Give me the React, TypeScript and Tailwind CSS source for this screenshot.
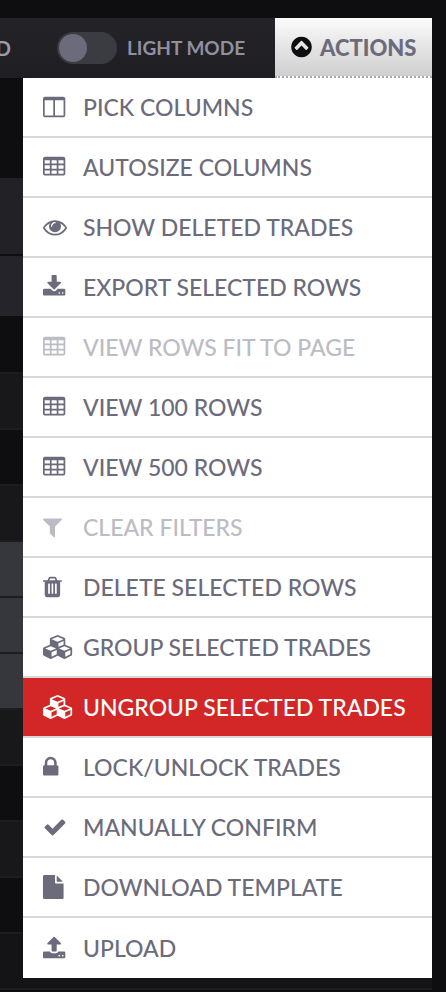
import type { ReactNode } from "react";

type IconProps = { d: string; x?: number; w?: number; className?: string };

/* Glyphs are drawn on a 1792-unit grid; x is the left edge of the glyph. */
function Icon({ d, x = 64, w = 2240, className = "w-[30px]" }: IconProps) {
  return (
    <svg
      viewBox={`${x} 0 ${w} 1792`}
      className={`h-6 shrink-0 fill-current ${className}`}
      fillRule="evenodd"
      aria-hidden="true"
    >
      <path d={d} />
    </svg>
  );
}

const cell = (x: number, y: number) =>
  `M${x + 32} ${y}h320q14 0 23 9t9 23v192q0 14-9 23t-23 9h-320q-14 0-23-9t-9-23v-192q0-14 9-23t23-9z`;

const TABLE =
  "M1728 288v1088q0 66-47 113t-113 47h-1344q-66 0-113-47t-47-113v-1088q0-66 47-113t113-47h1344q66 0 113 47t47 113z" +
  [384, 768, 1152].map((y) => [192, 704, 1216].map((x) => cell(x, y)).join("")).join("");
const COLUMNS =
  "M224 1536h608v-1152h-640v1120q0 13 9.5 22.5t22.5 9.5zm1376-32v-1120h-640v1152h608q13 0 22.5-9.5t9.5-22.5zm128-1216v1216q0 66-47 113t-113 47h-1344q-66 0-113-47t-47-113v-1216q0-66 47-113t113-47h1344q66 0 113 47t47 113z";
const EYE =
  "M1664 960q-152-236-381-353 61 104 61 225 0 185-131.5 316.5t-316.5 131.5-316.5-131.5-131.5-316.5q0-121 61-225-229 117-381 353 133 205 333.5 326.5t434.5 121.5 434.5-121.5 333.5-326.5zm-720-384q0-20-14-34t-34-14q-125 0-214.5 89.5t-89.5 214.5q0 20 14 34t34 14 34-14 14-34q0-86 61-147t147-61q20 0 34-14t14-34zm848 384q0 34-20 69-140 230-376.5 368.5t-499.5 138.5-499.5-139-376.5-368q-20-35-20-69t20-69q140-229 376.5-368t499.5-139 499.5 139 376.5 368q20 35 20 69z";
const DOWNLOAD =
  "M1344 1344q0-26-19-45t-45-19-45 19-19 45 19 45 45 19 45-19 19-45zm256 0q0-26-19-45t-45-19-45 19-19 45 19 45 45 19 45-19 19-45zm128-224v320q0 40-28 68t-68 28h-1472q-40 0-68-28t-28-68v-320q0-40 28-68t68-28h465l135 136q58 56 136 56t136-56l136-136h464q40 0 68 28t28 68zm-325-569q17 41-14 70l-448 448q-18 19-45 19t-45-19l-448-448q-31-29-14-70 17-39 59-39h256v-448q0-26 19-45t45-19h256q26 0 45 19t19 45v448h256q42 0 59 39z";
const UPLOAD =
  "M1344 1472q0-26-19-45t-45-19-45 19-19 45 19 45 45 19 45-19 19-45zm256 0q0-26-19-45t-45-19-45 19-19 45 19 45 45 19 45-19 19-45zm128-224v320q0 40-28 68t-68 28h-1472q-40 0-68-28t-28-68v-320q0-40 28-68t68-28h427q21 56 70.5 92t110.5 36h256q61 0 110.5-36t70.5-92h427q40 0 68 28t28 68zm-325-648q-17 40-59 40h-256v448q0 26-19 45t-45 19h-256q-26 0-45-19t-19-45v-448h-256q-42 0-59-40-17-39 14-69l448-448q18-19 45-19t45 19l448 448q31 30 14 69z";
const FILTER =
  "M1595 295q17 41-14 70l-493 493v742q0 42-39 59-13 5-25 5-27 0-45-19l-256-256q-19-19-19-45v-486l-493-493q-31-29-14-70 17-39 59-39h1280q42 0 59 39z";
const TRASH =
  "M704 1376v-704q0-14-9-23t-23-9h-64q-14 0-23 9t-9 23v704q0 14 9 23t23 9h64q14 0 23-9t9-23zm256 0v-704q0-14-9-23t-23-9h-64q-14 0-23 9t-9 23v704q0 14 9 23t23 9h64q14 0 23-9t9-23zm256 0v-704q0-14-9-23t-23-9h-64q-14 0-23 9t-9 23v704q0 14 9 23t23 9h64q14 0 23-9t9-23zm-544-992h448l-48-117q-7-9-17-11h-317q-10 2-17 11zm928 32v64q0 14-9 23t-23 9h-96v948q0 83-47 143.5t-113 60.5h-832q-66 0-113-58.5t-47-141.5v-952h-96q-14 0-23-9t-9-23v-64q0-14 9-23t23-9h309l70-167q15-37 54-63t79-26h320q40 0 79 26t54 63l70 167h309q14 0 23 9t9 23z";
const CUBES =
  "M640 1632l384-192v-314l-384 164v342zm-64-454l404-173-404-173-404 173zm1088 454l384-192v-314l-384 164v342zm-64-454l404-173-404-173-404 173zm-448-293l384-165v-266l-384 164v267zm-64-379l441-189-441-189-441 189zm1088 518v416q0 36-19 67t-52 47l-448 224q-25 14-57 14t-57-14l-448-224q-4-2-7-4-2 2-7 4l-448 224q-25 14-57 14t-57-14l-448-224q-33-16-52-47t-19-67v-416q0-38 21.5-70t56.5-48l434-186v-400q0-38 21.5-70t56.5-48l448-192q23-10 50-10t50 10l448 192q35 16 56.5 48t21.5 70v400l434 186q36 16 57 48t21 70z";
const LOCK =
  "M640 768h512v-192q0-106-75-181t-181-75-181 75-75 181v192zm832 96v576q0 40-28 68t-68 28h-960q-40 0-68-28t-28-68v-576q0-40 28-68t68-28h32v-192q0-184 132-316t316-132 316 132 132 316v192h32q40 0 68 28t28 68z";
const CHECK =
  "M1671 566q0 40-28 68l-724 724-136 136q-28 28-68 28t-68-28l-136-136-362-362q-28-28-28-68t28-68l136-136q28-28 68-28t68 28l294 295 656-657q28-28 68-28t68 28l136 136q28 28 28 68z";
const FILE =
  "M1152 512v-472q22 14 36 28l408 408q14 14 28 36h-472zm-128 32q0 40 28 68t68 28h544v1056q0 40-28 68t-68 28h-1344q-40 0-68-28t-28-68v-1600q0-40 28-68t68-28h800v544z";
const CHEVRON_CIRCLE_UP =
  "M1293 1099l102-102q19-19 19-45t-19-45l-454-454q-19-19-45-19t-45 19l-454 454q-19 19-19 45t19 45l102 102q19 19 45 19t45-19l307-307 307 307q19 19 45 19t45-19zm371-203q0 209-103 385.5t-279.5 279.5-385.5 103-385.5-103-279.5-279.5-103-385.5 103-385.5 279.5-279.5 385.5-103 385.5 103 279.5 279.5 103 385.5z";

type Item = { label: string; icon: ReactNode; disabled?: boolean; active?: boolean };

const items: Item[] = [
  { label: "PICK COLUMNS", icon: <Icon d={COLUMNS} /> },
  { label: "AUTOSIZE COLUMNS", icon: <Icon d={TABLE} /> },
  { label: "SHOW DELETED TRADES", icon: <Icon d={EYE} x={0} /> },
  { label: "EXPORT SELECTED ROWS", icon: <Icon d={DOWNLOAD} /> },
  { label: "VIEW ROWS FIT TO PAGE", icon: <Icon d={TABLE} />, disabled: true },
  { label: "VIEW 100 ROWS", icon: <Icon d={TABLE} /> },
  { label: "VIEW 500 ROWS", icon: <Icon d={TABLE} /> },
  { label: "CLEAR FILTERS", icon: <Icon d={FILTER} x={192} />, disabled: true },
  { label: "DELETE SELECTED ROWS", icon: <Icon d={TRASH} x={192} /> },
  { label: "GROUP SELECTED TRADES", icon: <Icon d={CUBES} x={0} /> },
  { label: "UNGROUP SELECTED TRADES", icon: <Icon d={CUBES} x={0} />, active: true },
  { label: "LOCK/UNLOCK TRADES", icon: <Icon d={LOCK} x={320} /> },
  { label: "MANUALLY CONFIRM", icon: <Icon d={CHECK} x={0} /> },
  { label: "DOWNLOAD TEMPLATE", icon: <Icon d={FILE} x={128} /> },
  { label: "UPLOAD", icon: <Icon d={UPLOAD} /> },
];

const gridRows = [
  "bg-[#0e0e10]",
  "bg-[#18181a]",
  "bg-[#0e0e10]",
  "bg-[#18181a]",
  "bg-[#36373c]",
  "bg-[#36373c]",
  "bg-[#36373c]",
  "bg-[#18181a]",
  "bg-[#0e0e10]",
  "bg-[#18181a]",
  "bg-[#0e0e10]",
  "bg-[#141416]",
];

function itemColors(item: Item) {
  if (item.active) return "bg-[#d32626] text-white";
  if (item.disabled) return "bg-white text-[#bcbcc4]";
  return "bg-white text-[#6c6b7b]";
}

export default function App() {
  return (
    <div className="min-h-screen overflow-hidden bg-[#0e0e10] pt-[18px] font-['Lato','Liberation_Sans',sans-serif]">
      <header className="mr-[14px] flex h-[60px] items-stretch bg-linear-to-b from-[#242428] to-[#1f1e23]">
        <div className="flex flex-1 items-center">
          <span className="flex w-[11px] justify-end overflow-hidden text-xl font-bold text-[#9b9aa6]">
            D
          </span>
          <label className="ml-[46px] flex items-center gap-[10px] text-[19px] font-bold whitespace-nowrap text-[#9190a0]">
            <input
              type="checkbox"
              className="flex h-8 w-[60px] appearance-none items-center rounded-full bg-[#3b3c42] px-[2px] before:size-7 before:rounded-full before:bg-[#6c6b7b] checked:justify-end"
            />
            LIGHT MODE
          </label>
        </div>
        <button
          type="button"
          aria-haspopup="menu"
          aria-expanded="true"
          className="flex w-[157px] items-center gap-2 border-b-2 border-dotted border-[#a9a9ab] bg-linear-to-b from-[#fbfbfb] to-[#cfcfd0] pl-4 text-[22px] font-black text-[#6c6b7b]"
        >
          <Icon d={CHEVRON_CIRCLE_UP} x={128} w={1536} className="w-[21px] text-[#0e0e10]" />
          ACTIONS
        </button>
      </header>

      <main className="relative pt-[100px]">
        <div className="h-[76px] bg-[#222226]" />
        <div className="mt-[2px] h-[60px] bg-[#24242a]" />
        <div className="pt-[2px]">
          {gridRows.map((color, i) => (
            <div key={i} className={`h-14 border-b-2 border-[#1d1d20] ${color}`} />
          ))}
        </div>
        <div className="absolute inset-y-0 right-0 w-[14px] bg-[#0e0e10]" />
        <div
          role="menu"
          aria-label="Actions"
          className="absolute top-0 right-[14px] left-[23px] bg-white"
        >
          {items.map((item) => (
            <button
              key={item.label}
              type="button"
              role="menuitem"
              disabled={item.disabled}
              className={`flex h-[60px] w-full items-center gap-[10px] border-b-2 border-[#d8d8dc] pl-5 text-left text-[23px] font-medium whitespace-nowrap last:border-b-0 ${itemColors(item)}`}
            >
              {item.icon}
              {item.label}
            </button>
          ))}
        </div>
      </main>
    </div>
  );
}
